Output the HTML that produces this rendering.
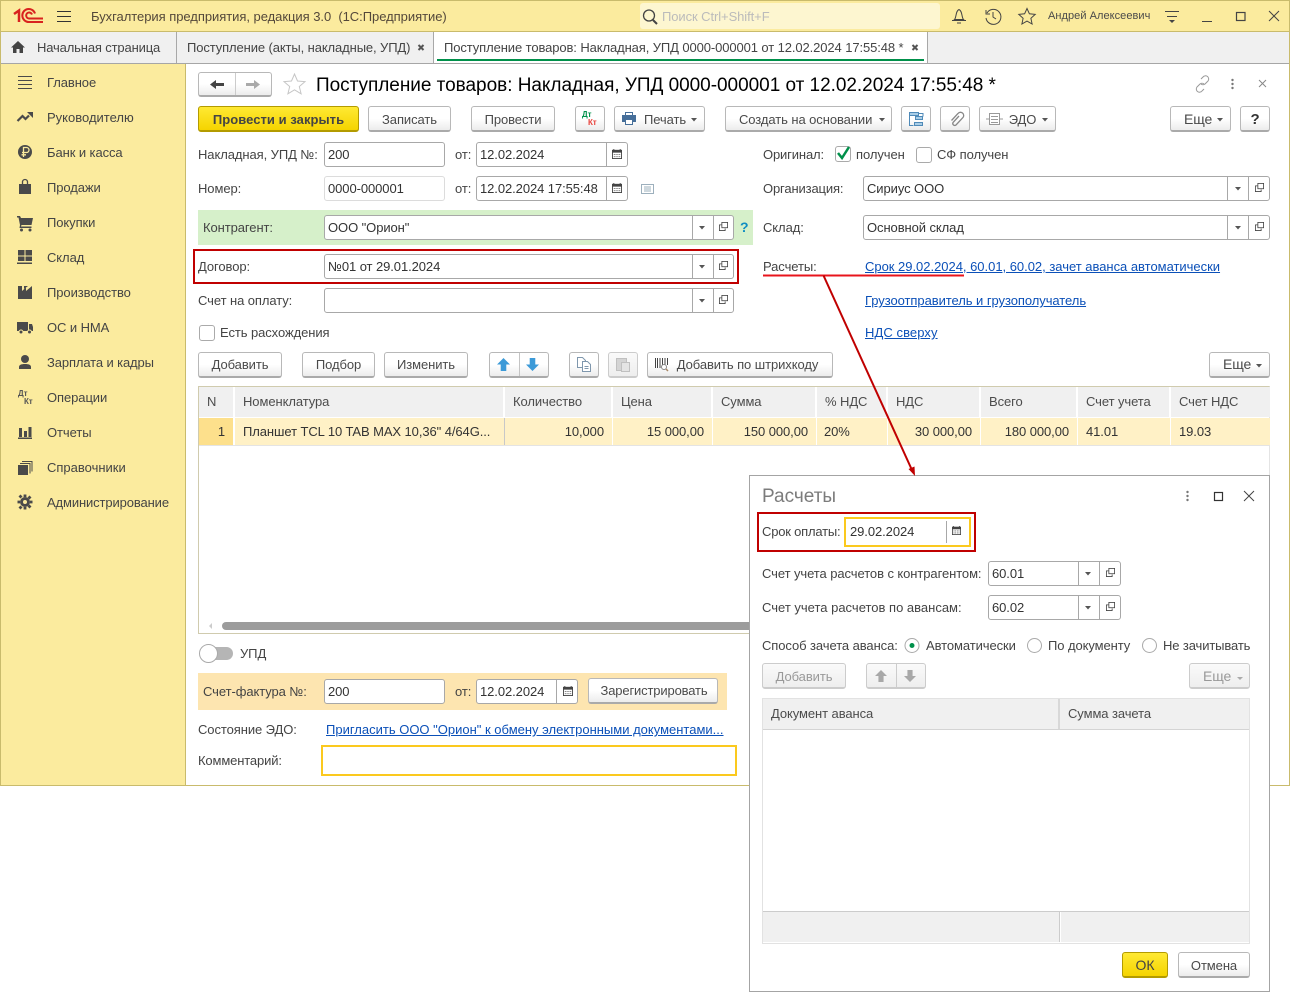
<!DOCTYPE html>
<html><head><meta charset="utf-8"><title>1С</title>
<style>
html,body{margin:0;padding:0;background:#fff}
body{width:1290px;height:993px;position:relative;overflow:hidden;font:13px "Liberation Sans","Noto Sans CJK SC",sans-serif;color:#444;letter-spacing:-.08px}
div,span,a{position:absolute;box-sizing:border-box}
.t{white-space:nowrap;line-height:16px;height:16px}
.v{color:#333}
.l{color:#0b50b8;text-decoration:underline;letter-spacing:-.02px}
.f{background:#fff;border:1px solid #a8a8a8;border-radius:3px;height:25px}
.f span{left:3px;top:3px;line-height:17px;color:#333;white-space:nowrap}
.f i{position:absolute;top:0;bottom:0;width:1px;background:#a8a8a8}
.b{height:26px;border:1px solid #b8b8b8;border-bottom:2px solid #aaa;border-radius:3px;background:linear-gradient(#fff,#fff 50%,#ececec);text-align:center;line-height:25px;color:#4a4a4a;white-space:nowrap}
.s{line-height:23px}
.y{background:linear-gradient(#ffe933,#f5d400);border-color:#b39b00;color:#444}
.d{color:#999;background:linear-gradient(#fafafa,#eee);border-color:#ccc}
.tc{top:0;height:30px;background:#f0f0f0;line-height:29px;padding-left:8px;color:#4c4c4c;white-space:nowrap;border-right:2px solid #fff}
.rc{top:0;height:27px;background:#fff1c6;line-height:28px;color:#333;white-space:nowrap;border-right:1px solid #fff;padding:0 8px}
.rr{text-align:right}
.chk{background:#fff;border:1px solid #aaa;border-radius:3px;width:16px;height:16px}
</style></head><body>

<!-- window -->
<div style="left:0;top:0;width:1290px;height:786px;border:1px solid #c9bb6c;background:#fff"></div>
<div style="left:1px;top:1px;width:1288px;height:30px;background:#fbeb9e"></div>
<div style="left:1px;top:31px;width:1288px;height:33px;background:#f0f0f0;border-bottom:1px solid #a6a6a6;border-top:1px solid #c9bb6c"></div>
<div style="left:1px;top:64px;width:185px;height:721px;background:#fbeb9e;border-right:1px solid #c9bb6c"></div>

<span class="t" style="left:91px;top:9px;color:#54483a;letter-spacing:-.04px">Бухгалтерия предприятия, редакция 3.0 &nbsp;(1С:Предприятие)</span>
<div style="left:640px;top:3px;width:300px;height:26px;background:#fdf6d0;border-radius:3px"></div>
<span class="t" style="left:662px;top:9px;color:#bbb">Поиск Ctrl+Shift+F</span>
<span class="t" style="left:1048px;top:8px;font-size:11px;color:#4a4a4a;letter-spacing:.05px">Андрей Алексеевич</span>

<!-- tabs -->
<span class="t" style="left:37px;top:40px;color:#444;letter-spacing:-.15px">Начальная страница</span>
<div style="left:176px;top:32px;width:1px;height:31px;background:#a8a8a8"></div>
<span class="t" style="left:187px;top:40px;color:#444;letter-spacing:-.11px">Поступление (акты, накладные, УПД)</span>
<div style="left:433px;top:32px;width:495px;height:31px;background:#fff;border-left:1px solid #a8a8a8;border-right:1px solid #a8a8a8"></div>
<span class="t" style="left:444px;top:40px;color:#444;letter-spacing:-.1px">Поступление товаров: Накладная, УПД 0000-000001 от 12.02.2024 17:55:48 *</span>
<div style="left:437px;top:59px;width:487px;height:2px;background:#00904a"></div>

<!-- sidebar -->
<span class="t" style="left:47px;top:75px">Главное</span>
<span class="t" style="left:47px;top:110px;letter-spacing:0">Руководителю</span>
<span class="t" style="left:47px;top:145px">Банк и касса</span>
<span class="t" style="left:47px;top:180px">Продажи</span>
<span class="t" style="left:47px;top:215px">Покупки</span>
<span class="t" style="left:47px;top:250px">Склад</span>
<span class="t" style="left:47px;top:285px">Производство</span>
<span class="t" style="left:47px;top:320px">ОС и НМА</span>
<span class="t" style="left:47px;top:355px;letter-spacing:-.12px">Зарплата и кадры</span>
<span class="t" style="left:47px;top:390px">Операции</span>
<span class="t" style="left:47px;top:425px">Отчеты</span>
<span class="t" style="left:47px;top:460px;letter-spacing:0">Справочники</span>
<span class="t" style="left:47px;top:495px;letter-spacing:-.12px">Администрирование</span>
<span class="t" style="left:18px;top:389px;font-size:8px;font-weight:bold;color:#555;line-height:9px">Дт</span>
<span class="t" style="left:24px;top:397px;font-size:8px;font-weight:bold;color:#555;line-height:9px">Кт</span>

<!-- form header -->
<div class="b" style="left:198px;top:72px;width:74px;height:25px"></div>
<div style="left:235px;top:73px;width:1px;height:22px;background:#ccc"></div>
<span class="t" style="left:316px;top:74px;height:24px;line-height:24px;font-size:19px;color:#000;letter-spacing:-.03px">Поступление товаров: Накладная, УПД 0000-000001 от 12.02.2024 17:55:48 *</span>

<!-- command bar -->
<div class="b y" style="left:198px;top:106px;width:161px;font-weight:bold;letter-spacing:.05px">Провести и закрыть</div>
<div class="b" style="left:368px;top:106px;width:83px">Записать</div>
<div class="b" style="left:471px;top:106px;width:84px">Провести</div>
<div class="b" style="left:575px;top:106px;width:30px"></div>
<span class="t" style="left:582px;top:110px;font-size:8px;font-weight:bold;color:#00904a;line-height:9px">Дт</span>
<span class="t" style="left:588px;top:118px;font-size:8px;font-weight:bold;color:#e8403a;line-height:9px">Кт</span>
<div class="b" style="left:614px;top:106px;width:91px;padding-left:11px">Печать</div>
<div class="b" style="left:725px;top:106px;width:167px;text-align:left;padding-left:13px">Создать на основании</div>
<div class="b" style="left:901px;top:106px;width:30px"></div>
<div class="b" style="left:940px;top:106px;width:30px"></div>
<div class="b" style="left:979px;top:106px;width:77px;padding-left:10px">ЭДО</div>
<div class="b" style="left:1170px;top:106px;width:61px;text-align:left;padding-left:13px;font-size:14px">Еще</div>
<div class="b" style="left:1240px;top:106px;width:30px;font-weight:bold;font-size:15px;color:#333">?</div>

<!-- left fields -->
<span class="t" style="left:198px;top:147px">Накладная, УПД №:</span>
<div class="f" style="left:324px;top:142px;width:121px"><span>200</span></div>
<span class="t" style="left:455px;top:147px">от:</span>
<div class="f" style="left:476px;top:142px;width:152px"><span>12.02.2024</span><i style="left:129px"></i></div>

<span class="t" style="left:198px;top:181px">Номер:</span>
<div class="f" style="left:324px;top:176px;width:121px;border-color:#dcdcdc"><span>0000-000001</span></div>
<span class="t" style="left:455px;top:181px">от:</span>
<div class="f" style="left:476px;top:176px;width:152px"><span>12.02.2024 17:55:48</span><i style="left:129px"></i></div>

<div style="left:198px;top:210px;width:555px;height:35px;background:#d6f0ca"></div>
<span class="t" style="left:203px;top:220px">Контрагент:</span>
<div class="f" style="left:324px;top:215px;width:410px"><span>ООО "Орион"</span><i style="left:367px"></i><i style="left:388px"></i></div>
<span class="t" style="left:740px;top:219px;color:#118ec2;font-weight:bold;font-size:14px">?</span>

<div style="left:193px;top:249px;width:546px;height:35px;border:2px solid #c00000"></div>
<span class="t" style="left:198px;top:259px">Договор:</span>
<div class="f" style="left:324px;top:254px;width:410px"><span>№01 от 29.01.2024</span><i style="left:367px"></i><i style="left:388px"></i></div>

<span class="t" style="left:198px;top:293px">Счет на оплату:</span>
<div class="f" style="left:324px;top:288px;width:410px"><i style="left:367px"></i><i style="left:388px"></i></div>

<div class="chk" style="left:199px;top:325px"></div>
<span class="t" style="left:220px;top:325px">Есть расхождения</span>

<!-- right fields -->
<span class="t" style="left:763px;top:147px;letter-spacing:-.14px">Оригинал:</span>
<div class="chk" style="left:835px;top:146px"></div>
<span class="t" style="left:856px;top:147px">получен</span>
<div class="chk" style="left:916px;top:147px"></div>
<span class="t" style="left:937px;top:147px">СФ получен</span>
<span class="t" style="left:763px;top:181px;letter-spacing:-.14px">Организация:</span>
<div class="f" style="left:863px;top:176px;width:407px"><span>Сириус ООО</span><i style="left:363px"></i><i style="left:384px"></i></div>
<span class="t" style="left:763px;top:220px">Склад:</span>
<div class="f" style="left:863px;top:215px;width:407px"><span>Основной склад</span><i style="left:363px"></i><i style="left:384px"></i></div>
<span class="t" style="left:763px;top:259px">Расчеты:</span>
<span class="t l" style="left:865px;top:259px">Срок 29.02.2024, 60.01, 60.02, зачет аванса автоматически</span>
<span class="t l" style="left:865px;top:293px;letter-spacing:-.06px">Грузоотправитель и грузополучатель</span>
<span class="t l" style="left:865px;top:325px;letter-spacing:.08px">НДС сверху</span>

<!-- table bar -->
<div class="b s" style="left:198px;top:352px;width:84px">Добавить</div>
<div class="b s" style="left:302px;top:352px;width:73px">Подбор</div>
<div class="b s" style="left:384px;top:352px;width:84px">Изменить</div>
<div class="b" style="left:489px;top:352px;width:60px"></div>
<div style="left:519px;top:353px;width:1px;height:23px;background:#c4c4c4"></div>
<div class="b" style="left:569px;top:352px;width:30px"></div>
<div class="b d" style="left:608px;top:352px;width:30px"></div>
<div class="b s" style="left:647px;top:352px;width:186px;padding-left:15px">Добавить по штрихкоду</div>
<div class="b s" style="left:1209px;top:352px;width:61px;text-align:left;padding-left:13px;font-size:14px">Еще</div>

<!-- table -->
<div style="left:198px;top:386px;width:1072px;height:248px;border:1px solid #d0cbae;border-right:1px solid #e4e4e4;background:#fff"></div>
<div style="left:199px;top:387px;width:1071px;height:30px">
<div class="tc" style="left:0;width:36px">N</div>
<div class="tc" style="left:36px;width:270px">Номенклатура</div>
<div class="tc" style="left:306px;width:108px">Количество</div>
<div class="tc" style="left:414px;width:100px">Цена</div>
<div class="tc" style="left:514px;width:104px">Сумма</div>
<div class="tc" style="left:618px;width:71px">% НДС</div>
<div class="tc" style="left:689px;width:93px">НДС</div>
<div class="tc" style="left:782px;width:97px">Всего</div>
<div class="tc" style="left:879px;width:93px">Счет учета</div>
<div class="tc" style="left:972px;width:99px;border-right:0">Счет НДС</div>
</div>
<div style="left:199px;top:418px;width:1071px;height:27px">
<div class="rc rr" style="left:0;width:36px;background:#fde08c;border-right:2px solid #fff">1</div>
<div class="rc" style="left:36px;width:270px;border-right:1px solid #c8c8c8">Планшет TCL 10 TAB MAX 10,36" 4/64G...</div>
<div class="rc rr" style="left:306px;width:108px">10,000</div>
<div class="rc rr" style="left:414px;width:100px">15 000,00</div>
<div class="rc rr" style="left:514px;width:104px">150 000,00</div>
<div class="rc" style="left:618px;width:71px;padding-left:7px">20%</div>
<div class="rc rr" style="left:689px;width:93px">30 000,00</div>
<div class="rc rr" style="left:782px;width:97px">180 000,00</div>
<div class="rc" style="left:879px;width:93px">41.01</div>
<div class="rc" style="left:972px;width:99px;border-right:0">19.03</div>
</div>
<div style="left:199px;top:445px;width:1071px;height:1px;background:#e4e4e4"></div>
<div style="left:222px;top:622px;width:540px;height:8px;background:#9c9c9c;border-radius:4px"></div>

<!-- bottom -->
<div style="left:200px;top:647px;width:33px;height:13px;background:#b5b5b5;border-radius:7px"></div>
<div style="left:199px;top:644px;width:19px;height:19px;background:#fff;border:1px solid #aaa;border-radius:50%"></div>
<span class="t" style="left:240px;top:646px">УПД</span>
<div style="left:198px;top:673px;width:529px;height:37px;background:#fde5b0"></div>
<span class="t" style="left:203px;top:684px">Счет-фактура №:</span>
<div class="f" style="left:324px;top:679px;width:121px"><span>200</span></div>
<span class="t" style="left:455px;top:684px">от:</span>
<div class="f" style="left:476px;top:679px;width:102px"><span>12.02.2024</span><i style="left:79px"></i></div>
<div class="b" style="left:588px;top:678px;width:130px;letter-spacing:-.15px;line-height:24px;padding-left:2px">Зарегистрировать</div>
<span class="t" style="left:198px;top:722px">Состояние ЭДО:</span>
<span class="t l" style="left:326px;top:722px;letter-spacing:0">Пригласить ООО "Орион" к обмену электронными документами...</span>
<span class="t" style="left:198px;top:753px;letter-spacing:-.14px">Комментарий:</span>
<div style="left:321px;top:745px;width:416px;height:31px;border:2px solid #fbc91e;background:#fff"></div>

<!-- dialog -->
<div style="left:749px;top:475px;width:521px;height:517px;background:#fff;border:1px solid #a4a4a4"></div>
<span class="t" style="left:762px;top:486px;height:21px;line-height:21px;font-size:19px;color:#7c7c7c;letter-spacing:0">Расчеты</span>
<div style="left:757px;top:512px;width:219px;height:40px;border:2px solid #c00000"></div>
<span class="t" style="left:762px;top:524px;letter-spacing:-.2px">Срок оплаты:</span>
<div style="left:844px;top:517px;width:127px;height:30px;border:2px solid #fbc91e;background:#fff"></div>
<span class="t v" style="left:850px;top:524px">29.02.2024</span>
<div style="left:946px;top:521px;width:1px;height:22px;background:#a8a8a8"></div>

<span class="t" style="left:762px;top:566px">Счет учета расчетов с контрагентом:</span>
<div class="f" style="left:988px;top:561px;width:133px"><span>60.01</span><i style="left:89px"></i><i style="left:110px"></i></div>
<span class="t" style="left:762px;top:600px;letter-spacing:0">Счет учета расчетов по авансам:</span>
<div class="f" style="left:988px;top:595px;width:133px"><span>60.02</span><i style="left:89px"></i><i style="left:110px"></i></div>

<span class="t" style="left:762px;top:638px">Способ зачета аванса:</span>
<span class="t" style="left:926px;top:638px">Автоматически</span>
<span class="t" style="left:1048px;top:638px">По документу</span>
<span class="t" style="left:1163px;top:638px;letter-spacing:-.12px">Не зачитывать</span>

<div class="b d" style="left:762px;top:663px;width:84px">Добавить</div>
<div class="b d" style="left:866px;top:663px;width:60px"></div>
<div style="left:896px;top:664px;width:1px;height:23px;background:#ccc"></div>
<div class="b d" style="left:1189px;top:663px;width:61px;text-align:left;padding-left:13px;font-size:14px">Еще</div>

<div style="left:762px;top:698px;width:488px;height:246px;border:1px solid #e2e2e2;background:#fff"></div>
<div class="tc" style="left:763px;top:699px;width:297px;background:#f0f0f0;border-right:2px solid #d8d8d8">Документ аванса</div>
<div class="tc" style="left:1060px;top:699px;width:189px;border-right:0">Сумма зачета</div>
<div style="left:763px;top:729px;width:486px;height:1px;background:#d4d4d4"></div>
<div style="left:763px;top:911px;width:486px;height:1px;background:#ccc"></div>
<div style="left:763px;top:912px;width:296px;height:30px;background:#f0f0f0"></div>
<div style="left:1061px;top:912px;width:188px;height:30px;background:#f0f0f0"></div>
<div style="left:1059px;top:912px;width:1px;height:30px;background:#ccc"></div>

<div class="b y" style="left:1122px;top:952px;width:46px;font-size:14px">ОК</div>
<div class="b" style="left:1178px;top:952px;width:72px">Отмена</div>

<!-- overlay -->
<svg width="1290" height="993" viewBox="0 0 1290 993" style="position:absolute;left:0;top:0" fill="none">
<defs>
<symbol id="cal" viewBox="0 0 11 11" overflow="visible"><path d="M2 0v2M9 0v2" stroke="#444"/><rect x=".5" y="1.5" width="10" height="9" fill="#fff" stroke="#444"/><rect x="0" y="1" width="11" height="3" fill="#444"/><path d="M2 6h7M2 8.500h7" stroke="#444" stroke-dasharray="1 1"/></symbol>
<symbol id="op" viewBox="0 0 11 11" overflow="visible"><rect x="3.500" y=".5" width="7" height="6.500" fill="#fff" stroke="#444"/><path d="M3 3.500H.5v7h7V8" stroke="#444"/></symbol>
<symbol id="dt" viewBox="0 0 7 4" overflow="visible"><path d="M0 0h7L3.500 4z" fill="#555"/></symbol>
<symbol id="up" viewBox="0 0 14 14" overflow="visible"><path d="M7 0l7 7H10v7H4V7H0z"/></symbol>
<symbol id="dn" viewBox="0 0 14 14" overflow="visible"><path d="M4 0h6v7h4l-7 7-7-7h4z"/></symbol>
</defs>

<!-- logo -->
<g stroke="#d8231f" stroke-width="2">
<path d="M14 14l5-3.500V22" stroke-width="2.500"/>
<path d="M35 13.500A6.500 6.500 0 1 0 29 22H43"/>
<path d="M32 14.500A3 3 0 1 0 29 18.500H43"/>
</g>
<path d="M57 11.500h14M57 16.500h14M57 21.500h14" stroke="#333"/>

<!-- header icons -->
<circle cx="649" cy="15.500" r="5.500" stroke="#444" stroke-width="1.300"/><path d="M653 20l4 4" stroke="#444" stroke-width="2"/>
<path d="M954.500 19.500c2-2 1-8.500 4.500-10 3.500 1.500 2.500 8 4.500 10zM952 20.500h14M957 23h4" stroke="#444" stroke-width="1"/>
<path d="M987 13a7.500 7.500 0 1 1-1 5M986 10v4h4M993 12v5l3 2" stroke="#444" stroke-width="1"/>
<path d="M1027 8.500l2.400 5.300 5.800.6-4.300 3.900 1.200 5.700-5.100-2.900-5.100 2.900 1.200-5.700-4.300-3.900 5.800-.6z" stroke="#444" stroke-width="1"/>
<path d="M1165 11.500h14M1167 16.500h10" stroke="#444"/><path d="M1169 20h6l-3 3z" fill="#444"/>
<path d="M1202 21.500h10" stroke="#444" stroke-width="1"/><rect x="1236.500" y="12.500" width="8.500" height="8" stroke="#444" stroke-width="1.200"/>
<path d="M1269 11l10 10M1279 11l-10 10" stroke="#444" stroke-width="1"/>

<!-- tabs icons -->
<path d="M18 41l7 6.500h-2V53h-3.500v-4h-3v4H13v-5.500h-2z" fill="#444"/>
<path d="M418.500 45l5 5M423.500 45l-5 5M912.500 45l5 5M917.500 45l-5 5" stroke="#555" stroke-width="2"/>

<!-- sidebar icons -->
<g fill="#4a4a4a">
<path d="M18 76.500h14M18 80.500h14M18 84.500h14M18 88.500h14" stroke="#4a4a4a"/>
<path d="M17.500 121l5-5 3 3 3.500-3.500" stroke="#4a4a4a" stroke-width="2.200" fill="none"/><path d="M27 112h6v6z"/>
<circle cx="25" cy="152" r="7"/>
<path d="M23.500 157v-9.500h3a2.300 2.300 0 0 1 0 5h-4.500M21.500 154.800h4.500" stroke="#fbeb9e" stroke-width="1.300" fill="none"/>
<path d="M19 184h12v10H19z"/><path d="M22.500 185v-3a2.500 2.500 0 0 1 5 0v3" stroke="#4a4a4a" stroke-width="1.300" fill="none"/>
<path d="M17 216h3l1 2h12l-1.500 7H21.500l-.5 1.500h10.500v1.500H19.500l.5-3-1.500-7.500H17z"/><circle cx="21.500" cy="230" r="1.500"/><circle cx="30" cy="230" r="1.500"/>
<path d="M18 250h6.500v5.500H18zM25.500 250H32v5.500h-6.500zM18 256.500h6.500V261H18zM25.500 256.500H32V261h-6.500zM17 262.500h15v1.500H17z"/>
<path d="M18 299v-13h4v5l4-3.500v3.500l6-5v13z"/><path d="M24 286h4l-4 3z"/>
<path d="M17 322h11v9H17zM29 324h3l1 3v4h-4z"/><circle cx="21" cy="332" r="2" stroke="#fbeb9e"/><circle cx="29.500" cy="332" r="2" stroke="#fbeb9e"/>
<circle cx="25" cy="359" r="4"/><path d="M19 369v-2c0-2 2-3 6-3s6 1 6 3v2z"/>
<path d="M19 428h3v9h-3zM24 431h3v6h-3zM28.500 427h3v10h-3zM18 437.500h14v1.500H18z"/>
<path d="M18 465h10v10H18z"/><path d="M20 463.500h10v10M22 461.500h10v10" stroke="#4a4a4a" fill="none"/>
<circle cx="25" cy="502" r="3.500" stroke="#4a4a4a" stroke-width="3" fill="none"/>
<path d="M25 497v-2.500M25 509.500V507M30 502h2.500M17.500 502H20M28.500 498.500l2-2M19.500 508.500l2-2M28.500 505.500l2 2M19.500 495.500l2 2" stroke="#4a4a4a" stroke-width="2.800"/>
</g>

<!-- form header icons -->
<path d="M210 84.500l6-4.500v3h8v3h-8v3z" fill="#444"/>
<path d="M260 84.500l-6-4.500v3h-8v3h8v3z" fill="#aaa"/>
<path d="M294.500 74l3 7 7.500.6-5.700 4.900 1.800 7.300-6.600-4-6.600 4 1.800-7.300-5.700-4.900 7.500-.6z" stroke="#c6c6c6" fill="#fff"/>
<g stroke="#999" stroke-width="1"><path d="M1201 79l2-2a3 3 0 0 1 5 4l-3 3a3 3 0 0 1-4 0M1204 89l-2 2a3 3 0 0 1-5-4l3-3a3 3 0 0 1 4 0"/></g>
<g fill="#777"><circle cx="1232.500" cy="80" r="1.200"/><circle cx="1232.500" cy="84" r="1.200"/><circle cx="1232.500" cy="88" r="1.200"/></g>
<path d="M1259 80l7 7M1266 80l-7 7" stroke="#888"/>

<!-- command icons -->
<path d="M622 115h14v7h-3v-3h-8v3h-3z" fill="#466f9a"/><rect x="625.500" y="112.500" width="7" height="3" stroke="#466f9a"/><rect x="625.500" y="119.500" width="7" height="5" fill="#fff" stroke="#466f9a"/>
<use href="#dt" x="691" y="118" width="6" height="3.500"/><use href="#dt" x="879" y="118" width="6" height="3.500"/><use href="#dt" x="1042" y="118" width="6" height="3.500"/><use href="#dt" x="1217" y="118" width="6" height="3.500"/>
<g stroke="#4f8ab8"><rect x="909.500" y="112.500" width="9" height="3" fill="#a9cde6"/><rect x="915.500" y="116.500" width="7" height="3" fill="#a9cde6"/><rect x="914.500" y="122.500" width="8" height="3" fill="#a9cde6"/><path d="M909.500 116v9.500h4M918.500 113.500h4.500v3"/></g>
<path d="M959 116l-6 6.500a2 2 0 0 0 3 2.500l7-7.500a3.200 3.200 0 0 0-5-4l-6.500 7" stroke="#888" stroke-width="1.300"/>
<g stroke="#999"><path d="M989.500 113.500h10v11h-10zM991 116.500h7M991 119.500h7M991 122.500h7" fill="#fff"/><path d="M986 119h3M1000 119h3"/></g>

<!-- fields icons -->
<use href="#cal" x="612" y="149" width="10" height="10"/><use href="#cal" x="612" y="183" width="10" height="10"/><use href="#cal" x="563" y="686" width="10" height="10"/><use href="#cal" x="952" y="526" width="9" height="9"/>
<g fill="none" stroke="#9db0bd"><rect x="641.500" y="184.500" width="12" height="9"/><path d="M644 187h7M644 189h7M644 191h7"/></g>
<use href="#dt" x="699" y="226" width="6" height="3.500"/><use href="#dt" x="699" y="265" width="6" height="3.500"/><use href="#dt" x="699" y="299" width="6" height="3.500"/>
<use href="#dt" x="1235" y="187" width="6" height="3.500"/><use href="#dt" x="1235" y="226" width="6" height="3.500"/><use href="#dt" x="1085" y="572" width="6" height="3.500"/><use href="#dt" x="1085" y="606" width="6" height="3.500"/>
<use href="#op" x="719" y="222" width="9" height="9"/><use href="#op" x="719" y="261" width="9" height="9"/><use href="#op" x="719" y="295" width="9" height="9"/>
<use href="#op" x="1255" y="183" width="9" height="9"/><use href="#op" x="1255" y="222" width="9" height="9"/><use href="#op" x="1106" y="568" width="9" height="9"/><use href="#op" x="1106" y="602" width="9" height="9"/>
<path d="M838 153l4 5 7-11" stroke="#00904a" stroke-width="2.500"/>

<!-- table bar icons -->
<g fill="#3c9ad8"><use href="#up" x="497" y="358" width="13" height="13"/><use href="#dn" x="526" y="358" width="13" height="13"/></g>
<g stroke="#7f97ad" fill="#fff"><path d="M577.500 357.500h5l3 3v7h-8z"/><path d="M582.500 361.500h5l3 3v7h-8z"/><path d="M584.500 366.500h4M584.500 368.500h4" /></g>
<g stroke="#c0c0c0" fill="#d4d4d4"><rect x="616.500" y="358.500" width="10" height="12"/><rect x="621.500" y="362.500" width="8" height="9" fill="#e4e4e4"/></g>
<path d="M655.500 358v10M657.500 358v10M660 358v10M662.500 358v10M665 358v7M667.500 358v7" stroke="#444"/><circle cx="664" cy="367" r="2.500" stroke="#888" fill="#fff"/><path d="M666 369l2 2" stroke="#a86" stroke-width="1.500"/>
<use href="#dt" x="1256" y="364" width="6" height="3.500"/>
<path d="M212 623v6l-3-3z" fill="#ccc"/>

<!-- dialog icons -->
<g fill="#777"><circle cx="1187.500" cy="492" r="1.200"/><circle cx="1187.500" cy="496" r="1.200"/><circle cx="1187.500" cy="500" r="1.200"/></g>
<rect x="1214.500" y="492.500" width="8" height="8" stroke="#333" stroke-width="1.200"/>
<path d="M1244 491l10 10M1254 491l-10 10" stroke="#444"/>
<circle cx="912" cy="645.500" r="7" fill="#fff" stroke="#aaa"/><circle cx="912" cy="645.500" r="2.500" fill="#00904a"/>
<circle cx="1034.500" cy="645.500" r="7" fill="#fff" stroke="#aaa"/>
<circle cx="1149.500" cy="645.500" r="7" fill="#fff" stroke="#aaa"/>
<g fill="#a8a8a8"><use href="#up" x="875" y="670" width="12" height="12"/><use href="#dn" x="904" y="670" width="12" height="12"/></g>
<path d="M1237 677h6l-3 3z" fill="#aaa"/>

<!-- annotation -->
<path d="M763 275.500H964" stroke="#e8141c" stroke-width="2"/>
<path d="M823.500 275.500L911.500 469" stroke="#c00000" stroke-width="2"/>
<path d="M908.500 469l6-2.500 .5 9.500z" fill="#c00000"/>
</svg>
</body></html>
